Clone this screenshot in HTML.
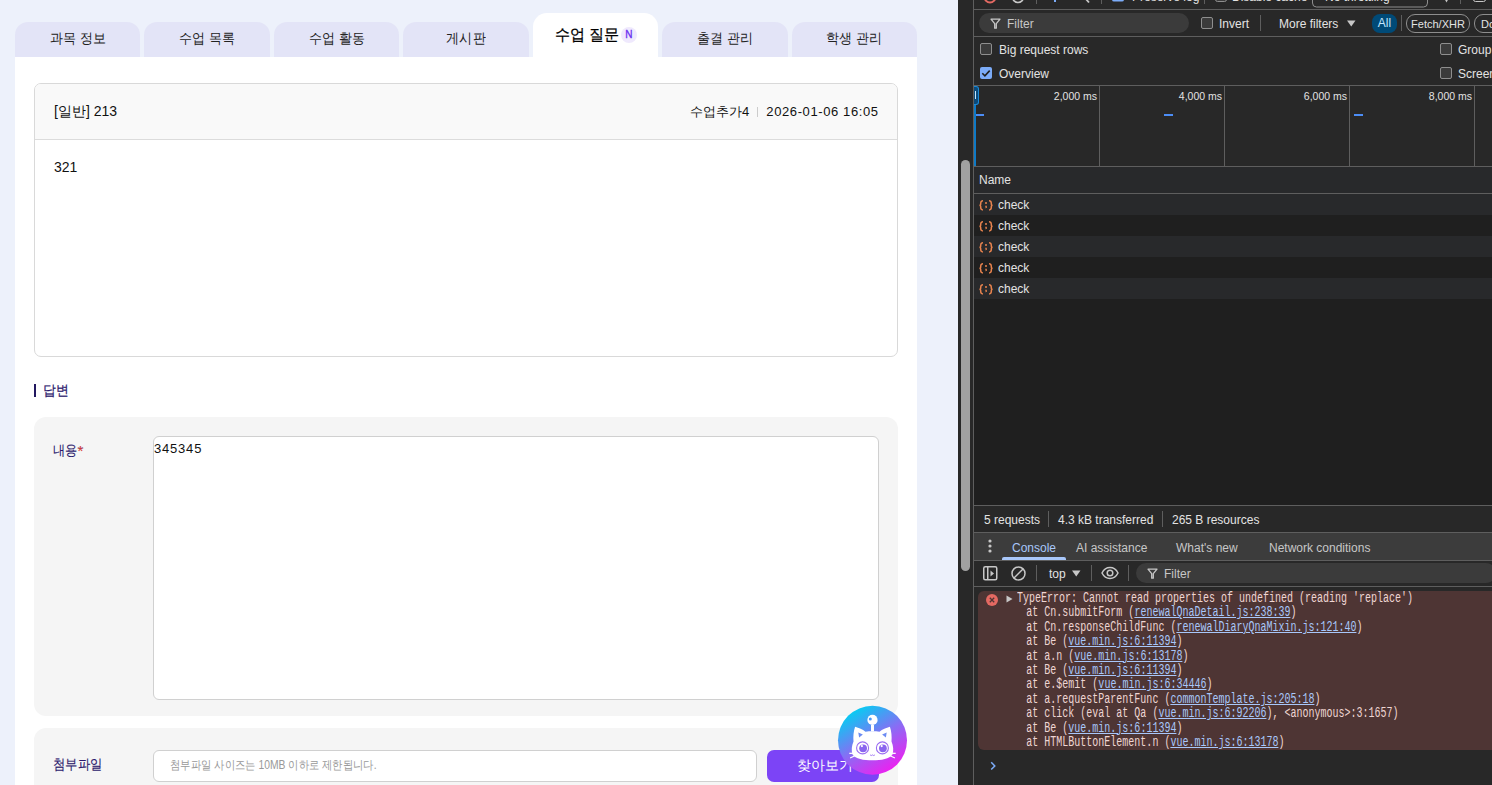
<!DOCTYPE html>
<html><head><meta charset="utf-8">
<style>
*{box-sizing:border-box;margin:0;padding:0}
html,body{width:1492px;height:785px;overflow:hidden;background:#282828}
body{position:relative;font-family:"Liberation Sans",sans-serif}
.a{position:absolute}
#page{left:0;top:0;width:958px;height:785px;background:#edf1fb;overflow:hidden}
.tab{position:absolute;top:22px;height:35px;width:125.4px;background:#e3e4f7;border-radius:13px 13px 0 0;font-size:14px;color:#222;text-align:center;line-height:33px}
.tab.on{top:13px;height:44px;background:#fff;border-radius:14px 14px 0 0;font-size:16px;color:#111;line-height:43px}
.badge{display:block;width:16px;height:16px;border-radius:50%;background:#efe9fd;color:#6a2ff0;font-size:10px;line-height:16px;text-align:center;font-weight:normal;-webkit-text-stroke:0.3px #6a2ff0}
.tt{display:inline-block;transform:scaleX(0.93)}
#panel{left:15px;top:57px;width:902px;height:740px;background:#fff}
#card{left:19px;top:26px;width:864px;height:274px;border:1px solid #d9d9d9;border-radius:7px;overflow:hidden}
#chead{left:0;top:0;width:862px;height:56px;background:#f9f9f9;border-bottom:1px solid #dcdcdc}
#dev{left:958px;top:0;width:534px;height:785px;background:#282828;overflow:hidden;color:#e3e3e3;font-size:12px}
.hl{position:absolute;left:15px;right:0;height:1px;background:#5e5e5e}
.cb{position:absolute;width:12px;height:12px;border:1px solid #8e8e8e;border-radius:2px;background:#3b3b3b}
.mono{font-family:"Liberation Mono",monospace;font-size:14px;line-height:14.4px;color:#eed5d3;white-space:pre;transform:scaleX(0.7143);transform-origin:0 0}
.mono u{color:#a8c7fa;text-decoration:underline}
</style></head>
<body>
<div id="page" class="a">
  <div class="tab" style="left:15px"><span class="tt">과목 정보</span></div>
  <div class="tab" style="left:144.43px"><span class="tt">수업 목록</span></div>
  <div class="tab" style="left:273.86px"><span class="tt">수업 활동</span></div>
  <div class="tab" style="left:403.29px"><span class="tt">게시판</span></div>
  <div class="tab on" style="left:532.71px"><span class="a" style="left:21.8px;top:0;display:block;transform:scaleX(0.94);transform-origin:0 0;white-space:nowrap;color:#000;-webkit-text-stroke:0.25px #000">수업 질문</span><span class="badge a" style="left:88.1px;top:13.9px">N</span></div>
  <div class="tab" style="left:662.14px"><span class="tt">출결 관리</span></div>
  <div class="tab" style="left:791.57px"><span class="tt">학생 관리</span></div>
  <div id="panel" class="a">
    <div id="card" class="a">
      <div id="chead" class="a">
        <div class="a" style="left:19px;top:19px;font-size:14px;color:#111">[일반] 213</div>
        <div class="a" style="right:19px;top:19px;font-size:13px;color:#111;white-space:nowrap">수업추가4<span style="display:inline-block;width:1px;height:10px;background:#ccc;margin:0 8px;vertical-align:-1px"></span><span style="letter-spacing:0.6px">2026-01-06 16:0</span>5</div>
      </div>
      <div class="a" style="left:19px;top:75px;font-size:14px;color:#111">321</div>
    </div>
    <div class="a" style="left:19px;top:327.3px;width:2.2px;height:13px;background:#221860"></div>
    <div class="a" style="left:27.5px;top:325px;font-size:14px;color:#2a186c;-webkit-text-stroke:0.2px #2a186c;transform:scaleX(0.92);transform-origin:0 0">답변</div>
    <div class="a" style="left:19px;top:360px;width:864px;height:299px;background:#f5f5f5;border-radius:12px">
      <div class="a" style="left:19px;top:25px;font-size:14px;color:#2a186c;-webkit-text-stroke:0.1px #2a186c;white-space:nowrap"><span style="display:inline-block;transform:scaleX(0.87);transform-origin:0 0">내용</span><span class="a" style="left:24.5px;top:-0.5px;color:#f03c28;font-size:15px">*</span></div>
      <div class="a" style="left:119px;top:19px;width:726px;height:264px;background:#fff;border:1px solid #d0d0d0;border-radius:6px">
        <div class="a" style="left:0px;top:4px;font-size:13px;color:#111;letter-spacing:0.8px">345345</div>
      </div>
    </div>
    <div class="a" style="left:19px;top:671px;width:864px;height:120px;background:#f5f5f5;border-radius:12px">
      <div class="a" style="left:19px;top:27.5px;-webkit-text-stroke:0.15px #2a186c;color:#2a186c;font-size:13.5px;transform:scaleX(0.88);transform-origin:0 0">첨부파일</div>
      <div class="a" style="left:119px;top:22px;width:604px;height:32px;background:#fff;border:1px solid #d0d0d0;border-radius:6px">
        <div class="a" style="left:16px;top:5.5px;font-size:12px;color:#999;white-space:nowrap;transform:scaleX(0.861);transform-origin:0 0">첨부파일 사이즈는 10MB 이하로 제한됩니다.</div>
      </div>
      <div class="a" style="left:733px;top:22px;width:112px;height:32px;background:#7c44f6;border-radius:7px;color:#fff;font-size:14px;text-align:center;line-height:30px;padding-left:3px">찾아보기</div>
    </div>
  </div>
<svg class="a" style="left:837px;top:705px;z-index:5" width="71" height="71" viewBox="-0.5 -0.5 71 71">
  <defs><linearGradient id="cg" x1="0.25" y1="0.05" x2="0.8" y2="0.95"><stop offset="0" stop-color="#05cdf2"/><stop offset="0.5" stop-color="#8a6cf4"/><stop offset="1" stop-color="#f21cf0"/></linearGradient></defs>
  <circle cx="35" cy="34.75" r="34.5" fill="url(#cg)"/>
  <circle cx="35" cy="14.4" r="5.1" fill="#fff"/>
  <circle cx="32.8" cy="13.4" r="1.5" fill="#4b9af5"/>
  <rect x="33.5" y="19.4" width="3" height="6.5" fill="#fff"/>
  <path d="M17.6 21.3C21.5 22.3 25 24 28 26.2C32.5 25.6 37.5 25.6 42 26.2C45 24 48.5 22.3 52.4 21.3C54 26 54.4 31 54 36C55.8 40 56.3 45 55 49C52 53.5 44 54.8 35 54.8C26 54.8 18 53.5 15 49C13.7 45 14.2 40 16 36C15.6 31 16 26 17.6 21.3Z" fill="#fff"/>
  <path d="M20.8 27l4.6 1.9-3.8 3.1z" fill="#6c8cf3"/>
  <path d="M49.2 27l-4.6 1.9 3.8 3.1z" fill="#6c8cf3"/>
  <circle cx="25.1" cy="42.4" r="6" fill="none" stroke="#9a6df2" stroke-width="1.1"/>
  <circle cx="44.9" cy="42.4" r="6" fill="none" stroke="#9a6df2" stroke-width="1.1"/>
  <circle cx="25.6" cy="42.8" r="3.9" fill="#8a66ee"/>
  <circle cx="45.4" cy="42.8" r="3.9" fill="#8a66ee"/>
  <circle cx="24.4" cy="40.6" r="1.1" fill="#fff"/>
  <circle cx="44.2" cy="40.6" r="1.1" fill="#fff"/>
  <path d="M19 47.6L11.8 47.9M19 49.4L12.6 52.6" stroke="#fff" stroke-width="1.1" fill="none"/>
  <path d="M51 47.6L58.2 47.9M51 49.4L57.4 52.6" stroke="#fff" stroke-width="1.1" fill="none"/>
  <path d="M32.6 49.4q1.2 1.3 2.4 0q1.2 1.3 2.4 0" stroke="#9a6df2" stroke-width="0.9" fill="none"/>
</svg>
</div>
<div id="dev" class="a">
  <!-- left strip + scrollbar -->
  <div class="a" style="left:0;top:0;width:15px;height:785px;background:#282828"></div>
  <div class="a" style="left:3px;top:160px;width:9px;height:411px;background:#a1a1a1;border-radius:5px"></div>
  <div class="a" style="left:15px;top:0;width:1px;height:785px;background:#5e5e5e"></div>
  <!-- horizontal borders -->
  <div class="hl" style="top:9px"></div>
  <div class="hl" style="top:36px"></div>
  <div class="hl" style="top:85px"></div>
  <div class="hl" style="top:166px"></div>
  <div class="a" style="left:16px;top:167px;width:518px;height:26px;background:#28292b"></div>
  <div class="hl" style="top:193px"></div>
  <div class="a" style="left:16px;top:194px;width:518px;height:311px;background:#1f1f1f"></div>
  <div class="a" style="left:16px;top:194px;width:518px;height:21px;background:#28292b"></div>
  <div class="a" style="left:16px;top:236px;width:518px;height:21px;background:#28292b"></div>
  <div class="a" style="left:16px;top:278px;width:518px;height:21px;background:#28292b"></div>
  <div class="hl" style="top:505px"></div>
  <div class="hl" style="top:532px"></div>
  <div class="a" style="left:16px;top:533px;width:518px;height:27px;background:#3c3c3c"></div>
  <div class="hl" style="top:560px"></div>
  <div class="hl" style="top:586px"></div>
  <!-- top toolbar (clipped) -->
  <svg class="a" style="left:0;top:0" width="534" height="10" viewBox="0 0 534 10">
    <circle cx="32" cy="-3" r="5.5" fill="none" stroke="#e46962" stroke-width="2"/>
    <circle cx="60" cy="-3" r="5.5" fill="none" stroke="#c7c7c7" stroke-width="1.6"/>
    <rect x="78" y="0" width="1" height="4" fill="#5e5e5e"/>
    <rect x="96" y="0" width="2" height="2" fill="#7cacf8"/>
    <line x1="127" y1="-2" x2="131" y2="2.5" stroke="#c7c7c7" stroke-width="1.8"/>
    <rect x="143" y="0" width="1" height="4" fill="#5e5e5e"/>
    <rect x="154" y="-10" width="12" height="11.5" rx="2" fill="#7cacf8"/>
    <rect x="246" y="0" width="1" height="4" fill="#5e5e5e"/>
    <rect x="257.5" y="-10" width="11" height="11.5" rx="2" fill="#3b3b3b" stroke="#8e8e8e"/>
    <rect x="354.5" y="-10" width="115" height="17" rx="4" fill="none" stroke="#8e8e8e"/>
    <path d="M485 -4L492 -4L488.5 2.5z" fill="#c7c7c7"/><rect x="502" y="0" width="1" height="4" fill="#5e5e5e"/>
    <rect x="515.5" y="-10" width="12" height="11.5" rx="2" fill="none" stroke="#c7c7c7"/>
  </svg>
  <div class="a" style="left:174px;top:-10px;font-size:12px;color:#e3e3e3;white-space:nowrap">Preserve log</div>
  <div class="a" style="left:274px;top:-10px;font-size:12px;color:#e3e3e3;white-space:nowrap">Disable cache</div>
  <div class="a" style="left:367px;top:-10px;font-size:12px;color:#e3e3e3;white-space:nowrap">No throttling</div>
  <!-- filter row -->
  <div class="a" style="left:21px;top:13px;width:210px;height:20px;border-radius:10px;background:#3b3b3b"></div>
  <svg class="a" style="left:32px;top:18px" width="11" height="11" viewBox="0 0 11 11"><path d="M1 1.2h9L6.3 5.6v4.6h-1.6V5.6z" fill="none" stroke="#c7c7c7" stroke-width="1.3" stroke-linejoin="round"/></svg>
  <div class="a" style="left:49px;top:17px;font-size:12px;color:#c7c7c7">Filter</div>
  <div class="cb" style="left:243px;top:17px"></div>
  <div class="a" style="left:261px;top:17px;font-size:12px">Invert</div>
  <div class="a" style="left:302px;top:15px;width:1px;height:16px;background:#5e5e5e"></div>
  <div class="a" style="left:321px;top:17px;font-size:12px">More filters</div>
  <svg class="a" style="left:389px;top:20px" width="9" height="7" viewBox="0 0 9 7"><path d="M0 0.5h8.5L4.25 6.5z" fill="#c7c7c7"/></svg>
  <div class="a" style="left:414px;top:14px;width:25px;height:19px;border-radius:8px;background:#004a77;color:#c2e7ff;font-size:12px;line-height:19px;text-align:center">All</div>
  <div class="a" style="left:443px;top:15px;width:1px;height:16px;background:#5e5e5e"></div>
  <div class="a" style="left:448px;top:14px;width:64px;height:19px;border-radius:9px;border:1px solid #8e8e8e;font-size:11px;line-height:18px;text-align:center">Fetch/XHR</div>
  <div class="a" style="left:516px;top:14px;width:50px;height:19px;border-radius:9px;border:1px solid #8e8e8e;font-size:11px;line-height:18px;padding-left:6px">Doc</div>
  <!-- checkbox rows -->
  <div class="cb" style="left:22px;top:43px"></div>
  <div class="a" style="left:41px;top:43px;font-size:12px">Big request rows</div>
  <div class="a" style="left:22px;top:67px;width:12px;height:12px;border-radius:2px;background:#7cacf8"></div>
  <svg class="a" style="left:22px;top:67px" width="12" height="12" viewBox="0 0 12 12"><path d="M2.3 6.2l2.6 2.6 4.8-5.2" fill="none" stroke="#1f1f1f" stroke-width="1.6"/></svg>
  <div class="a" style="left:41px;top:67px;font-size:12px">Overview</div>
  <div class="cb" style="left:482px;top:43px"></div>
  <div class="a" style="left:500px;top:43px;font-size:12px;white-space:nowrap">Group by frame</div>
  <div class="cb" style="left:482px;top:67px"></div>
  <div class="a" style="left:500px;top:67px;font-size:12px;white-space:nowrap">Screenshots</div>
  <!-- timeline -->
  <div class="a" style="left:141px;top:86px;width:1px;height:80px;background:#5e5e5e"></div>
  <div class="a" style="left:266px;top:86px;width:1px;height:80px;background:#5e5e5e"></div>
  <div class="a" style="left:391px;top:86px;width:1px;height:80px;background:#5e5e5e"></div>
  <div class="a" style="left:516px;top:86px;width:1px;height:80px;background:#5e5e5e"></div>
  <div class="a" style="left:60px;top:90px;width:79px;text-align:right;font-size:10.5px">2,000 ms</div>
  <div class="a" style="left:185px;top:90px;width:79px;text-align:right;font-size:10.5px">4,000 ms</div>
  <div class="a" style="left:310px;top:90px;width:79px;text-align:right;font-size:10.5px">6,000 ms</div>
  <div class="a" style="left:435px;top:90px;width:79px;text-align:right;font-size:10.5px">8,000 ms</div>
  <div class="a" style="left:16px;top:86px;width:2px;height:80px;background:#0e7ac6"></div>
  <div class="a" style="left:16px;top:86px;width:5px;height:19px;background:#0b4a7a;border:1px solid #1a8ad8;border-left:0;border-radius:0 3px 3px 0"></div>
  <div class="a" style="left:17px;top:91px;width:1px;height:8px;background:#c2e7ff"></div>
  <div class="a" style="left:18px;top:114px;width:8px;height:2px;background:#4c8df6"></div>
  <div class="a" style="left:206px;top:114px;width:9px;height:2px;background:#4c8df6"></div>
  <div class="a" style="left:396px;top:114px;width:9px;height:2px;background:#4c8df6"></div>
  <!-- name header & rows -->
  <div class="a" style="left:21px;top:173px;font-size:12px">Name</div>
  <svg class="a" style="left:21px;top:200px" width="14" height="11" viewBox="0 0 14 11"><path d="M3.9 0.7C2.1 0.7 1.7 1.5 1.7 3V4.2C1.7 4.8 1.2 5.2 0.6 5.35C1.2 5.5 1.7 5.9 1.7 6.5V7.6C1.7 9.1 2.1 9.9 3.9 9.9M10.1 0.7C11.9 0.7 12.3 1.5 12.3 3V4.2C12.3 4.8 12.8 5.2 13.4 5.35C12.8 5.5 12.3 5.9 12.3 6.5V7.6C12.3 9.1 11.9 9.9 10.1 9.9" fill="none" stroke="#e8834e" stroke-width="1.5"/><circle cx="7" cy="3.1" r="1" fill="#e8834e"/><path d="M6.2 5.7h1.6v1.6L6.7 8.6z" fill="#e8834e"/></svg>
  <div class="a" style="left:40px;top:198px;font-size:12px">check</div>
  <svg class="a" style="left:21px;top:221px" width="14" height="11" viewBox="0 0 14 11"><path d="M3.9 0.7C2.1 0.7 1.7 1.5 1.7 3V4.2C1.7 4.8 1.2 5.2 0.6 5.35C1.2 5.5 1.7 5.9 1.7 6.5V7.6C1.7 9.1 2.1 9.9 3.9 9.9M10.1 0.7C11.9 0.7 12.3 1.5 12.3 3V4.2C12.3 4.8 12.8 5.2 13.4 5.35C12.8 5.5 12.3 5.9 12.3 6.5V7.6C12.3 9.1 11.9 9.9 10.1 9.9" fill="none" stroke="#e8834e" stroke-width="1.5"/><circle cx="7" cy="3.1" r="1" fill="#e8834e"/><path d="M6.2 5.7h1.6v1.6L6.7 8.6z" fill="#e8834e"/></svg>
  <div class="a" style="left:40px;top:219px;font-size:12px">check</div>
  <svg class="a" style="left:21px;top:242px" width="14" height="11" viewBox="0 0 14 11"><path d="M3.9 0.7C2.1 0.7 1.7 1.5 1.7 3V4.2C1.7 4.8 1.2 5.2 0.6 5.35C1.2 5.5 1.7 5.9 1.7 6.5V7.6C1.7 9.1 2.1 9.9 3.9 9.9M10.1 0.7C11.9 0.7 12.3 1.5 12.3 3V4.2C12.3 4.8 12.8 5.2 13.4 5.35C12.8 5.5 12.3 5.9 12.3 6.5V7.6C12.3 9.1 11.9 9.9 10.1 9.9" fill="none" stroke="#e8834e" stroke-width="1.5"/><circle cx="7" cy="3.1" r="1" fill="#e8834e"/><path d="M6.2 5.7h1.6v1.6L6.7 8.6z" fill="#e8834e"/></svg>
  <div class="a" style="left:40px;top:240px;font-size:12px">check</div>
  <svg class="a" style="left:21px;top:263px" width="14" height="11" viewBox="0 0 14 11"><path d="M3.9 0.7C2.1 0.7 1.7 1.5 1.7 3V4.2C1.7 4.8 1.2 5.2 0.6 5.35C1.2 5.5 1.7 5.9 1.7 6.5V7.6C1.7 9.1 2.1 9.9 3.9 9.9M10.1 0.7C11.9 0.7 12.3 1.5 12.3 3V4.2C12.3 4.8 12.8 5.2 13.4 5.35C12.8 5.5 12.3 5.9 12.3 6.5V7.6C12.3 9.1 11.9 9.9 10.1 9.9" fill="none" stroke="#e8834e" stroke-width="1.5"/><circle cx="7" cy="3.1" r="1" fill="#e8834e"/><path d="M6.2 5.7h1.6v1.6L6.7 8.6z" fill="#e8834e"/></svg>
  <div class="a" style="left:40px;top:261px;font-size:12px">check</div>
  <svg class="a" style="left:21px;top:284px" width="14" height="11" viewBox="0 0 14 11"><path d="M3.9 0.7C2.1 0.7 1.7 1.5 1.7 3V4.2C1.7 4.8 1.2 5.2 0.6 5.35C1.2 5.5 1.7 5.9 1.7 6.5V7.6C1.7 9.1 2.1 9.9 3.9 9.9M10.1 0.7C11.9 0.7 12.3 1.5 12.3 3V4.2C12.3 4.8 12.8 5.2 13.4 5.35C12.8 5.5 12.3 5.9 12.3 6.5V7.6C12.3 9.1 11.9 9.9 10.1 9.9" fill="none" stroke="#e8834e" stroke-width="1.5"/><circle cx="7" cy="3.1" r="1" fill="#e8834e"/><path d="M6.2 5.7h1.6v1.6L6.7 8.6z" fill="#e8834e"/></svg>
  <div class="a" style="left:40px;top:282px;font-size:12px">check</div>
  
  <!-- status bar -->
  <div class="a" style="left:26px;top:513px;font-size:12px;white-space:nowrap">5 requests</div>
  <div class="a" style="left:90px;top:511px;width:1px;height:16px;background:#5e5e5e"></div>
  <div class="a" style="left:100px;top:513px;font-size:12px;white-space:nowrap">4.3 kB transferred</div>
  <div class="a" style="left:204px;top:511px;width:1px;height:16px;background:#5e5e5e"></div>
  <div class="a" style="left:214px;top:513px;font-size:12px;white-space:nowrap">265 B resources</div>
  <!-- drawer tabs -->
  <svg class="a" style="left:30px;top:539px" width="4" height="14" viewBox="0 0 4 14"><circle cx="2" cy="2" r="1.6" fill="#c7c7c7"/><circle cx="2" cy="7" r="1.6" fill="#c7c7c7"/><circle cx="2" cy="12" r="1.6" fill="#c7c7c7"/></svg>
  <div class="a" style="left:54px;top:541px;font-size:12px;color:#a8c7fa">Console</div>
  <div class="a" style="left:44px;top:557px;width:64px;height:3px;background:#a8c7fa;border-radius:2px 2px 0 0"></div>
  <div class="a" style="left:118px;top:541px;font-size:12px;color:#c7c7c7">AI assistance</div>
  <div class="a" style="left:218px;top:541px;font-size:12px;color:#c7c7c7">What's new</div>
  <div class="a" style="left:311px;top:541px;font-size:12px;color:#c7c7c7">Network conditions</div>
  <!-- console toolbar -->
  <svg class="a" style="left:25px;top:566px" width="15" height="15" viewBox="0 0 15 15"><rect x="0.75" y="0.75" width="13" height="13" rx="1.5" fill="none" stroke="#c7c7c7" stroke-width="1.5"/><rect x="4" y="1" width="1.5" height="13" fill="#c7c7c7"/><path d="M7.5 4.5l3.5 3-3.5 3z" fill="#c7c7c7"/></svg>
  <svg class="a" style="left:53px;top:566px" width="15" height="15" viewBox="0 0 15 15"><circle cx="7.5" cy="7.5" r="6.5" fill="none" stroke="#c7c7c7" stroke-width="1.5"/><line x1="3" y1="12" x2="12" y2="3" stroke="#c7c7c7" stroke-width="1.5"/></svg>
  <div class="a" style="left:78px;top:565px;width:1px;height:16px;background:#5e5e5e"></div>
  <div class="a" style="left:91px;top:567px;font-size:12px">top</div>
  <svg class="a" style="left:114px;top:570px" width="9" height="7" viewBox="0 0 9 7"><path d="M0 0.5h8.5L4.25 6.5z" fill="#c7c7c7"/></svg>
  <div class="a" style="left:133px;top:565px;width:1px;height:16px;background:#5e5e5e"></div>
  <svg class="a" style="left:143px;top:566px" width="18" height="14" viewBox="0 0 18 14"><path d="M1 7C3 3 6 1.5 9 1.5S15 3 17 7C15 11 12 12.5 9 12.5S3 11 1 7z" fill="none" stroke="#c7c7c7" stroke-width="1.5"/><circle cx="9" cy="7" r="2.8" fill="none" stroke="#c7c7c7" stroke-width="1.5"/></svg>
  <div class="a" style="left:170px;top:565px;width:1px;height:16px;background:#5e5e5e"></div>
  <div class="a" style="left:178px;top:563px;width:360px;height:20px;border-radius:10px;background:#3b3b3b"></div>
  <svg class="a" style="left:189px;top:568px" width="11" height="11" viewBox="0 0 11 11"><path d="M1 1.2h9L6.3 5.6v4.6h-1.6V5.6z" fill="none" stroke="#c7c7c7" stroke-width="1.3" stroke-linejoin="round"/></svg>
  <div class="a" style="left:206px;top:567px;font-size:12px;color:#c7c7c7">Filter</div>
  <!-- console error -->
  <div class="a" style="left:20px;top:591px;width:520px;height:159px;background:#4e3534;border-radius:6px"></div>
  <svg class="a" style="left:28px;top:594px" width="12" height="12" viewBox="0 0 12 12"><circle cx="6" cy="6" r="6" fill="#e46962"/><path d="M3.8 3.8l4.4 4.4M8.2 3.8l-4.4 4.4" stroke="#4e3534" stroke-width="1.3"/></svg>
  <svg class="a" style="left:48px;top:595px" width="7" height="8" viewBox="0 0 7 8"><path d="M0.5 0.5L6.5 4 0.5 7.5z" fill="#c7c7c7"/></svg>
  <div id="err" class="a" style="left:59px;top:591px"><div class="mono">TypeError: Cannot read properties of undefined (reading 'replace')
<span style="margin-left:13.1px"></span>at Cn.submitForm (<u>renewalQnaDetail.js:238:39</u>)
<span style="margin-left:13.1px"></span>at Cn.responseChildFunc (<u>renewalDiaryQnaMixin.js:121:40</u>)
<span style="margin-left:13.1px"></span>at Be (<u>vue.min.js:6:11394</u>)
<span style="margin-left:13.1px"></span>at a.n (<u>vue.min.js:6:13178</u>)
<span style="margin-left:13.1px"></span>at Be (<u>vue.min.js:6:11394</u>)
<span style="margin-left:13.1px"></span>at e.$emit (<u>vue.min.js:6:34446</u>)
<span style="margin-left:13.1px"></span>at a.requestParentFunc (<u>commonTemplate.js:205:18</u>)
<span style="margin-left:13.1px"></span>at click (eval at Qa (<u>vue.min.js:6:92206</u>), &lt;anonymous&gt;:3:1657)
<span style="margin-left:13.1px"></span>at Be (<u>vue.min.js:6:11394</u>)
<span style="margin-left:13.1px"></span>at HTMLButtonElement.n (<u>vue.min.js:6:13178</u>)</div></div>
  <svg class="a" style="left:32px;top:761px" width="8" height="11" viewBox="0 0 8 11"><path d="M1.2 1.2L4.8 4.9L1.2 8.6" fill="none" stroke="#7cacf8" stroke-width="1.5"/></svg>
</div>
</body></html>
